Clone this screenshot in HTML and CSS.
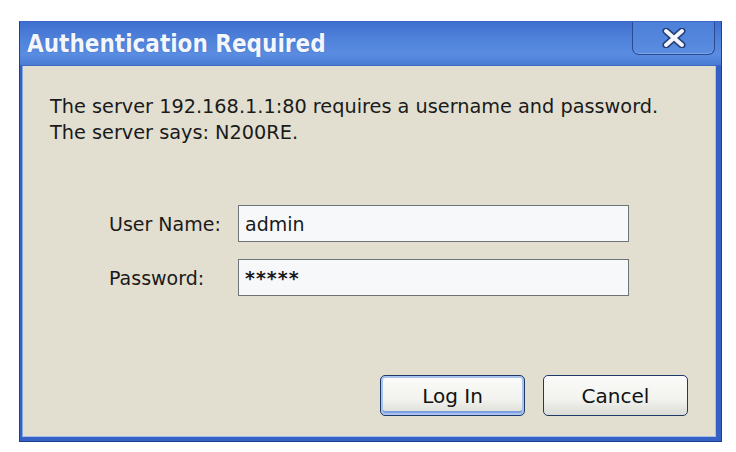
FILE: index.html
```html
<!DOCTYPE html>
<html>
<head>
<meta charset="utf-8">
<link rel="stylesheet" href="styles.css">
</head>
<body>
<div class="window">
  <div class="titlebar">
    <span class="title">Authentication Required</span>
    <div class="close">
      <svg width="26" height="20" viewBox="0 0 26 20">
        <path d="M5 3 L21 17 M21 3 L5 17" stroke="#243f7a" stroke-width="7" stroke-linecap="round"/>
        <path d="M5 3 L21 17 M21 3 L5 17" stroke="#f4f6fb" stroke-width="4" stroke-linecap="round"/>
      </svg>
    </div>
  </div>
  <div class="body">
    <div class="message">
      <div>The server 192.168.1.1:80 requires a username and password.</div>
      <div>The server says: N200RE.</div>
    </div>
    <div class="form">
      <label class="label">User Name:</label>
      <div class="input">admin</div>
      <label class="label">Password:</label>
      <div class="input pw">*****</div>
    </div>
    <div class="spacer"></div>
    <div class="buttons">
      <div class="btn default">Log In</div>
      <div class="btn">Cancel</div>
    </div>
  </div>
</div>
</body>
</html>
```
FILE: styles.css
```css
html, body {
  margin: 0;
  padding: 0;
  background: #ffffff;
}
body {
  padding: 21px 0 0 19px;
  font-family: "DejaVu Sans", sans-serif;
}
.window {
  width: 703px;
  height: 421px;
  box-sizing: border-box;
  display: flex;
  flex-direction: column;
  background: #3560c4;
  border: 1px solid #203f92;
  border-top-color: #3c66c8;
}
.titlebar {
  height: 43px;
  flex: none;
  display: flex;
  align-items: flex-start;
  justify-content: space-between;
  background: linear-gradient(#3f6fd0 0%, #4f82da 40%, #5a8ce0 75%, #4a7cd4 100%);
  border-bottom: 1px solid #3d68c4;
}
.title {
  font-family: "DejaVu Sans Condensed", "DejaVu Sans", sans-serif;
  font-stretch: condensed;
  font-weight: bold;
  font-size: 24px;
  color: #f3f6fc;
  margin: 8px 0 0 7px;
  text-shadow: 0 0 1px #2e56b2;
}
.close {
  width: 83px;
  height: 33px;
  margin-right: 6px;
  box-sizing: border-box;
  border: 1px solid #2a4a92;
  border-top: none;
  border-radius: 0 0 7px 7px;
  background: linear-gradient(#4c7fd8, #5b8de0);
  box-shadow: inset 0 -1px 0 #7aa4ea;
  display: flex;
  align-items: center;
  justify-content: center;
}
.body {
  flex: 1;
  margin: 0 5px 4px 2px;
  background: #e2dfd0;
  border-right: 1px solid #a6c0ec;
  border-bottom: 1px solid #a6c0ec;
  border-left: 1px solid #8aa8e0;
  display: flex;
  flex-direction: column;
  padding: 28px 27px 20px 27px;
  color: #1a1a1a;
  font-size: 19.3px;
}
.message {
  line-height: 26px;
}
.form {
  display: grid;
  grid-template-columns: 129px 391px;
  row-gap: 17px;
  margin: 59px 0 0 59px;
  align-items: center;
}
.label {
  font-size: 19px;
}
.input {
  height: 37px;
  box-sizing: border-box;
  border: 1px solid #6e7378;
  background: #f7f8f9;
  padding: 0 6px;
  display: flex;
  align-items: center;
  font-size: 19px;
}
.input.pw {
  font-size: 19px;
  letter-spacing: 1px;
  font-weight: bold;
}
.spacer {
  flex: 1;
}
.buttons {
  display: flex;
  justify-content: flex-end;
  gap: 18px;
}
.btn {
  width: 145px;
  height: 41px;
  box-sizing: border-box;
  border: 1px solid #1f3a68;
  border-radius: 5px;
  background: linear-gradient(#fbfbfa 0%, #f2f2ee 60%, #dcdcd6 100%);
  display: flex;
  align-items: center;
  justify-content: center;
  font-size: 20px;
  color: #111;
}
.btn.default {
  box-shadow: inset 0 0 0 2px #a9c3ef, inset 0 -2px 0 2px #7c9ee0;
}
```
